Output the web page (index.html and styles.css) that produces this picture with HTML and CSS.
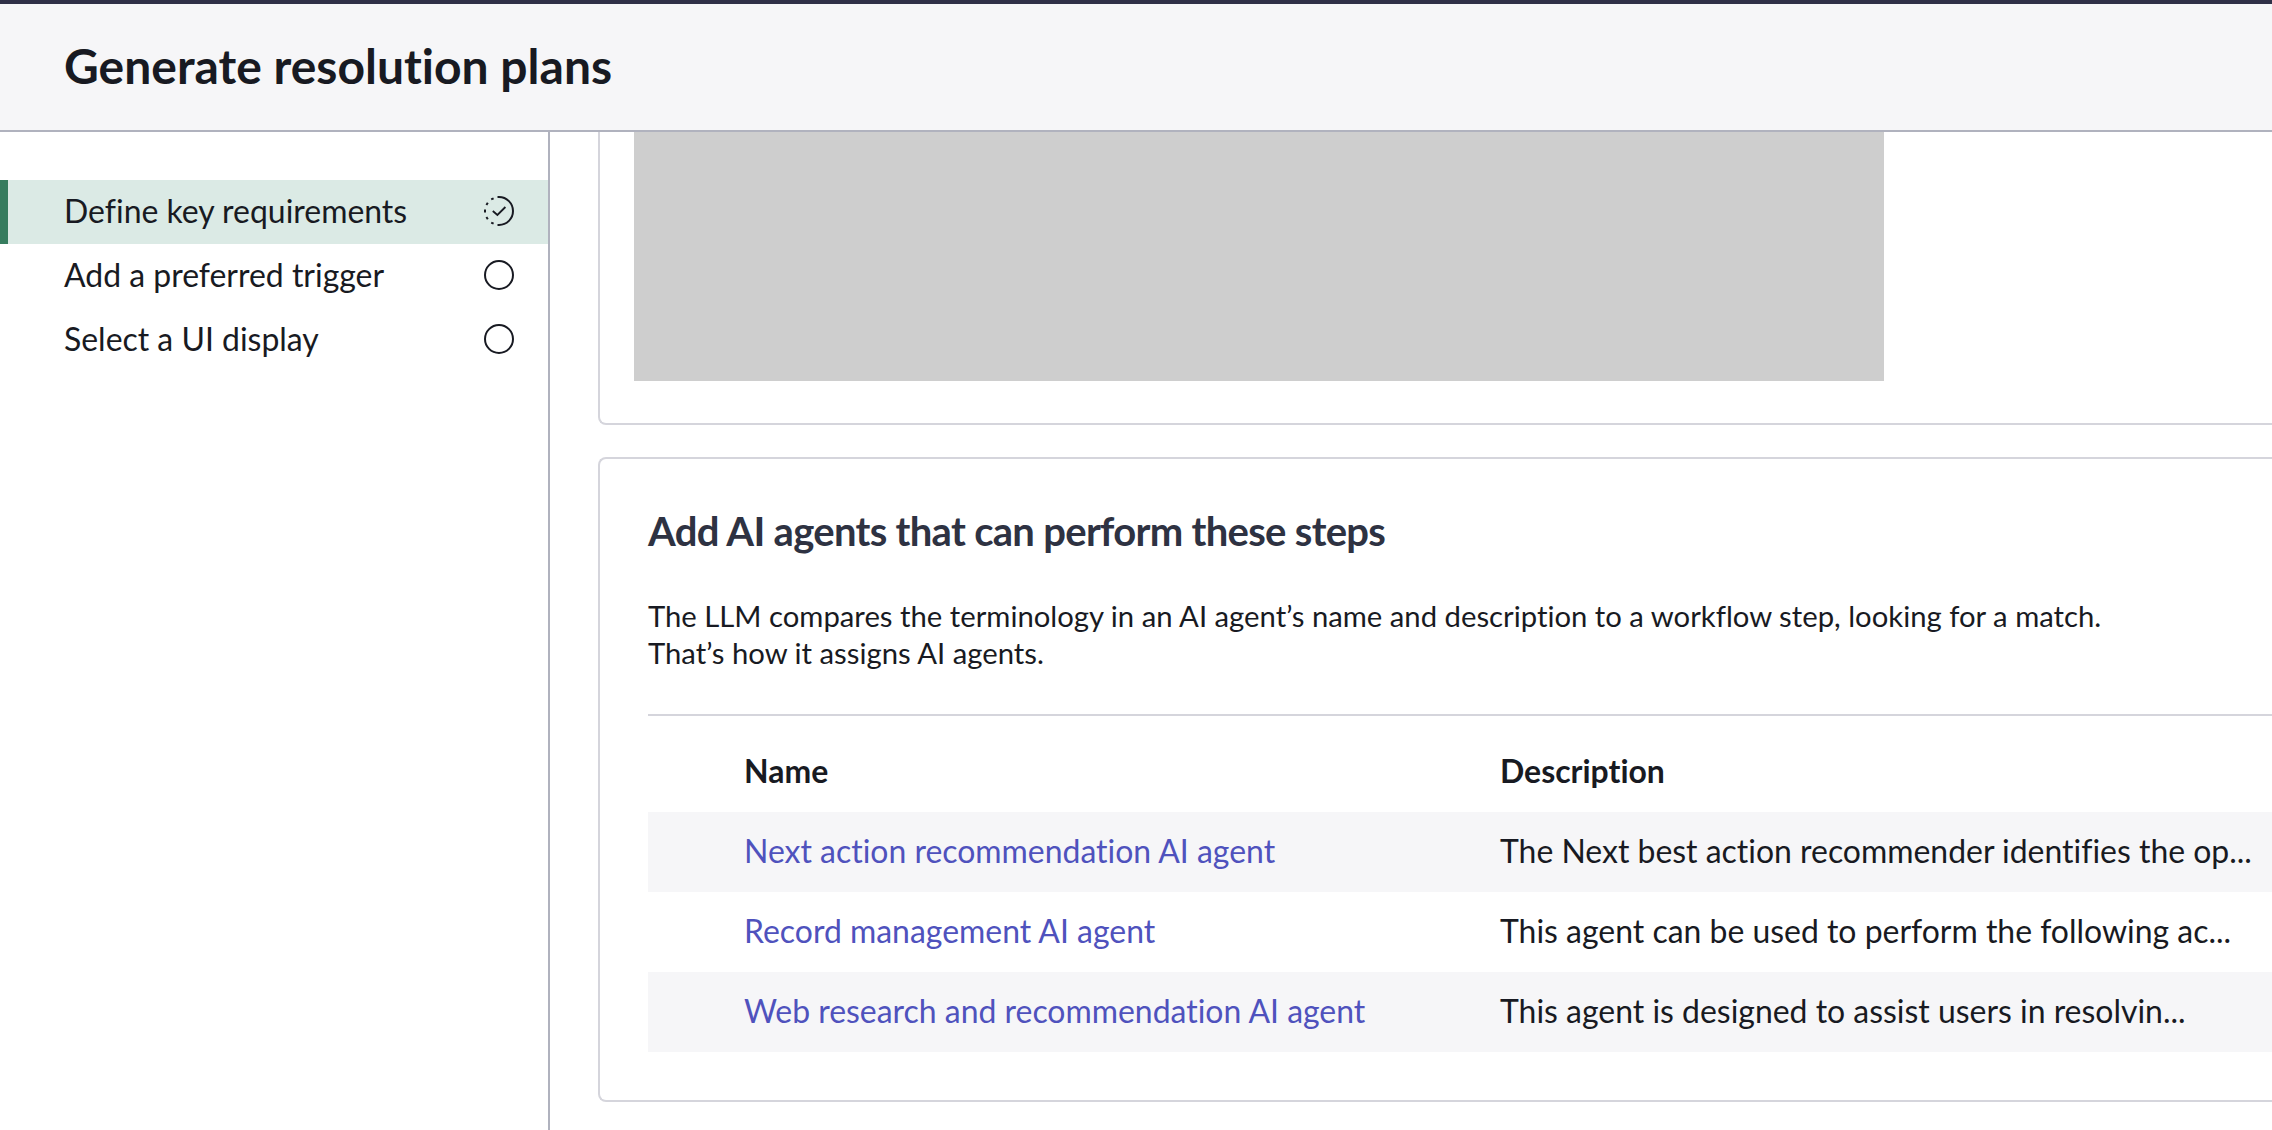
FILE: index.html
```html
<!DOCTYPE html>
<html lang="en">
<head>
    <meta charset="UTF-8">
    <meta name="viewport" content="width=device-width, initial-scale=1.0">
    <title>Generate resolution plans</title>
    <link rel="stylesheet" href="styles.css">
</head>
<body>
    <header class="page-header">
        <h1>Generate resolution plans</h1>
    </header>
    <div class="layout">
        <nav class="sidebar">
            <a class="step active" href="#">
                <span>Define key requirements</span>
                <svg class="step-icon" viewBox="0 0 32 32">
                    <path d="M14.5 2H16a14 14 0 0 1 0 28h-1.5" />
                    <path d="M10.6 3.3l-2.4 1.1M4.8 7.8l-1.4 2.2M2 14.5v3M3.4 22l1.4 2.2M8.2 27.6l2.4 1.1" />
                    <path class="tick" d="M9.8 16l4.6 4 8-8" />
                </svg>
            </a>
            <a class="step" href="#">
                <span>Add a preferred trigger</span>
                <svg class="step-icon" viewBox="0 0 32 32">
                    <circle cx="16" cy="16" r="14" />
                </svg>
            </a>
            <a class="step" href="#">
                <span>Select a UI display</span>
                <svg class="step-icon" viewBox="0 0 32 32">
                    <circle cx="16" cy="16" r="14" />
                </svg>
            </a>
        </nav>
        <main class="content">
            <section class="card card-media">
                <div class="placeholder"></div>
            </section>
            <section class="card card-agents">
                <h2>Add AI agents that can perform these steps</h2>
                <p class="intro">The LLM compares the terminology in an AI agent’s name and description to a workflow step, looking for a match.<br>That’s how it assigns AI agents.</p>
                <table class="agents">
                    <thead>
                        <tr>
                            <th class="name">Name</th>
                            <th>Description</th>
                        </tr>
                    </thead>
                    <tbody>
                        <tr>
                            <td><a href="#">Next action recommendation AI agent</a></td>
                            <td>The Next best action recommender identifies the op...</td>
                        </tr>
                        <tr>
                            <td><a href="#">Record management AI agent</a></td>
                            <td>This agent can be used to perform the following ac...</td>
                        </tr>
                        <tr>
                            <td><a href="#">Web research and recommendation AI agent</a></td>
                            <td>This agent is designed to assist users in resolvin...</td>
                        </tr>
                    </tbody>
                </table>
            </section>
        </main>
    </div>
</body>
</html>
```
FILE: styles.css
```css
* {
    box-sizing: border-box;
}

body {
    display: flex;
    flex-direction: column;
    height: 100vh;
    margin: 0;
    overflow: hidden;
    font-family: Lato, sans-serif;
    font-size: 31.95px;
    font-variant-ligatures: none;
    color: #181a22;
    background-color: #fff;
}

/* Header */
.page-header {
    flex: none;
    display: flex;
    align-items: center;
    height: 132px;
    padding: 0 64px 3px;
    background-color: #f6f6f8;
    border-top: 4px solid #2f3047;
    border-bottom: 2px solid #b0b2be;
}

.page-header h1 {
    margin: 0;
    font-size: 48px;
    line-height: 56px;
}

.layout {
    display: flex;
    flex: 1;
    min-height: 0;
}

/* Step list */
.sidebar {
    flex: none;
    width: 550px;
    padding-top: 48px;
    border-right: 2px solid #b0b2be;
}

.step {
    display: flex;
    align-items: center;
    justify-content: space-between;
    height: 64px;
    padding: 0 33px 2px 56px;
    border-left: 8px solid transparent;
    line-height: 36px;
    color: inherit;
    text-decoration: none;
}

.step.active {
    background-color: #dbeae5;
    border-left-color: #367c5e;
}

.step-icon {
    width: 32px;
    height: 32px;
    fill: none;
    stroke: #181a22;
    stroke-width: 2;
}

.step-icon .tick {
    stroke-width: 1.8;
}

/* Cards */
.content {
    flex: 1;
    min-width: 0;
    padding-left: 48px;
}

.card {
    border: 2px solid #d5d5dc;
    border-right: none;
    border-radius: 8px 0 0 8px;
}

.card-media {
    margin-bottom: 32px;
    padding: 0 0 42px 34px;
    border-top: none;
    border-top-left-radius: 0;
}

.placeholder {
    width: 1250px;
    height: 249px;
    background-color: #cecece;
}

.card-agents {
    padding: 47px 0 48px 48px;
}

.card-agents h2 {
    margin: 0;
    font-size: 40px;
    line-height: 50px;
    letter-spacing: -0.7px;
    color: #2e3242;
}

.intro {
    margin: 41px 0 43px;
    font-size: 29.27px;
    line-height: 37px;
    white-space: nowrap;
}

/* Agents table */
.agents {
    width: 100%;
    border-collapse: separate;
    border-spacing: 0;
    border-top: 2px solid #d5d5dc;
    table-layout: fixed;
    line-height: 38px;
}

.agents th {
    height: 96px;
    padding: 14px 0 0;
    text-align: left;
}

.agents td {
    height: 80px;
    padding: 0 0 2px;
    white-space: nowrap;
}

.agents .name {
    width: 852px;
}

.agents th:first-child,
.agents td:first-child {
    padding-left: 96px;
}

.agents tbody tr:nth-child(odd) {
    background-color: #f6f6f8;
}

.agents a {
    color: #4f52bd;
    text-decoration: none;
}
```
